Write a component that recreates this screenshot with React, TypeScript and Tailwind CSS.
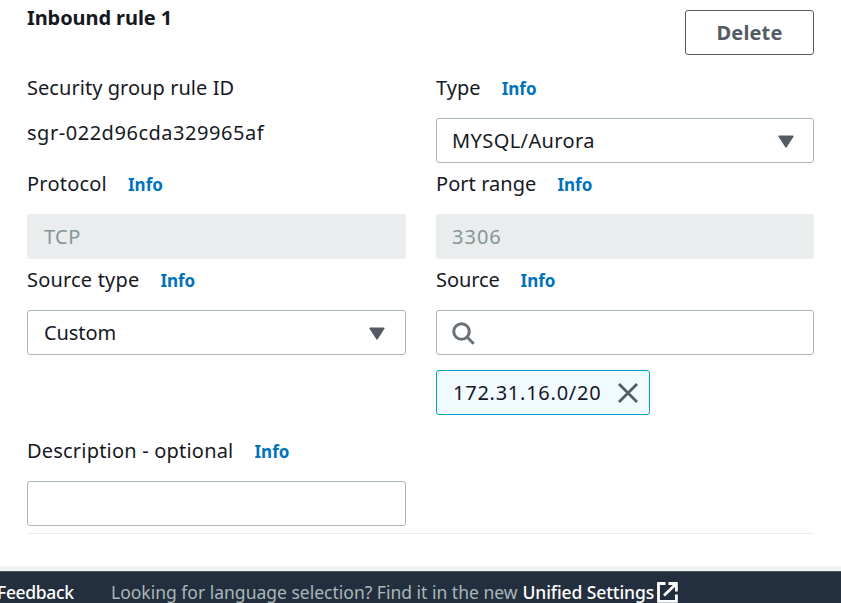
import React from "react";

type TextProps = { text: string; tracking: string };

function Info() {
  return (
    <a className="whitespace-nowrap pt-px text-[17px] font-bold leading-[30px] text-[#0073bb]">Info</a>
  );
}

function Label({ text, tracking }: TextProps) {
  return (
    <div className="flex h-[30px] items-start gap-[21px]">
      <span className={`whitespace-nowrap text-[20px] leading-[30px] ${tracking}`}>{text}</span>
      <Info />
    </div>
  );
}

function Caret() {
  return (
    <svg className="mt-px" width="16" height="13" viewBox="0 0 16 13" fill="#545b64" stroke="#545b64" strokeWidth="1.6" strokeLinejoin="round">
      <path d="M1.2 1.2h13.600L8 11.800z" />
    </svg>
  );
}

function Select({ text, tracking, padding }: TextProps & { padding: string }) {
  return (
    <div className={`mt-[15px] flex h-[45px] items-center justify-between rounded-[3px] border border-[#aab7b8] ${padding}`}>
      <span className={`text-[20px] leading-[30px] ${tracking}`}>{text}</span>
      <Caret />
    </div>
  );
}

function Disabled({ text, tracking, padding }: TextProps & { padding: string }) {
  return (
    <div className={`mt-[15px] flex h-[45px] items-center rounded-[3px] bg-[#e9eded] text-[#879596] ${padding}`}>
      <span className={`text-[20px] leading-[30px] ${tracking}`}>{text}</span>
    </div>
  );
}

export default function App() {
  return (
    <div className="flex h-[603px] w-[841px] flex-col overflow-hidden bg-white font-['Noto_Sans',sans-serif] text-[#16191f]">
      <main className="h-[566px] pl-[27px] pr-[27px]">
        <div className="flex h-[73px] items-start justify-between">
          <h2 className="mt-[3px] text-[20px] font-bold leading-[30px] tracking-[-0.08px]">Inbound rule 1</h2>
          <button className="mt-[10px] h-[45px] w-[129px] rounded-[3px] border border-[#545b64] text-[20px] font-bold leading-[30px] tracking-[0.15px] text-[#545b64]">
            Delete
          </button>
        </div>
        <div className="grid grid-cols-[379px_378px] gap-x-[30px]">
          <div className="h-[96px]">
            <span className="block h-[30px] whitespace-nowrap text-[20px] leading-[30px] tracking-[0.05px]">Security group rule ID</span>
            <span className="mt-[15px] block whitespace-nowrap text-[20px] leading-[30px] tracking-[0.53px]">sgr-022d96cda329965af</span>
          </div>
          <div className="h-[96px]">
            <Label text="Type" tracking="tracking-[0.05px]" />
            <Select text="MYSQL/Aurora" tracking="tracking-[0.4px]" padding="pl-[15px] pr-[19px]" />
          </div>
          <div className="h-[96px]">
            <Label text="Protocol" tracking="tracking-[0.22px]" />
            <Disabled text="TCP" tracking="tracking-[0.4px]" padding="pl-[17px]" />
          </div>
          <div className="h-[96px]">
            <Label text="Port range" tracking="tracking-[0.05px]" />
            <Disabled text="3306" tracking="tracking-[1px]" padding="pl-[16px]" />
          </div>
          <div className="h-[171px]">
            <Label text="Source type" tracking="tracking-[0.18px]" />
            <Select text="Custom" tracking="tracking-[-0.1px]" padding="pl-4 pr-[20px]" />
          </div>
          <div className="h-[171px]">
            <Label text="Source" tracking="tracking-[-0.1px]" />
            <div className="mt-[15px] flex h-[45px] items-center rounded-[3px] border border-[#aab7b8] pl-[15px]">
              <svg className="mt-[2px]" width="23" height="23" viewBox="0 0 23 23" fill="none" stroke="#687078" strokeWidth="3">
                <circle cx="9.5" cy="9.5" r="7.8" />
                <path d="M15 15l6.700 6.700" />
              </svg>
            </div>
            <div className="mt-[15px] flex h-[45px] w-[214px] items-center justify-between rounded-[3px] border border-[#00a1c9] bg-[#f1faff] pl-4 pr-[11px]">
              <span className="whitespace-nowrap text-[20px] leading-[30px] tracking-[0.75px]">172.31.16.0/20</span>
              <svg className="shrink-0" width="20" height="20" viewBox="0 0 20 20" fill="none" stroke="#545b64" strokeWidth="2.8">
                <path d="M1 1l18 18M19 1L1 19" />
              </svg>
            </div>
          </div>
          <div className="h-[90px]">
            <Label text="Description - optional" tracking="tracking-[0.2px]" />
            <div className="mt-[15px] h-[45px] rounded-[3px] border border-[#aab7b8]" />
          </div>
        </div>
        <div className="mt-[7px] h-px bg-[#eaeded]" />
      </main>
      <div className="h-[5px] shrink-0 bg-[#f2f3f3]" />
      <footer className="flex h-8 shrink-0 items-start border-t border-[#4b5a63] bg-[#232f3e] text-[17.5px] leading-5 text-[#aab7b8]">
        <span className="-ml-[3px] mt-[10px] w-[114px] shrink-0 whitespace-nowrap font-medium tracking-[-0.35px] text-white">Feedback</span>
        <span className="mt-[10px] whitespace-nowrap">Looking for language selection? Find it in the new</span>
        <span className="ml-[5px] mt-[10px] whitespace-nowrap font-medium tracking-[-0.1px] text-white">Unified Settings</span>
        <svg className="ml-[3px] mt-[10px] shrink-0" width="21" height="21" viewBox="0 0 21 21" fill="none" stroke="#fff" strokeWidth="2.8">
          <path d="M8.500 1.500H1.500v17.800h17.900V12.500M11.500 1.500h7.900v7.900M19 2L7 13.500" />
        </svg>
      </footer>
    </div>
  );
}
